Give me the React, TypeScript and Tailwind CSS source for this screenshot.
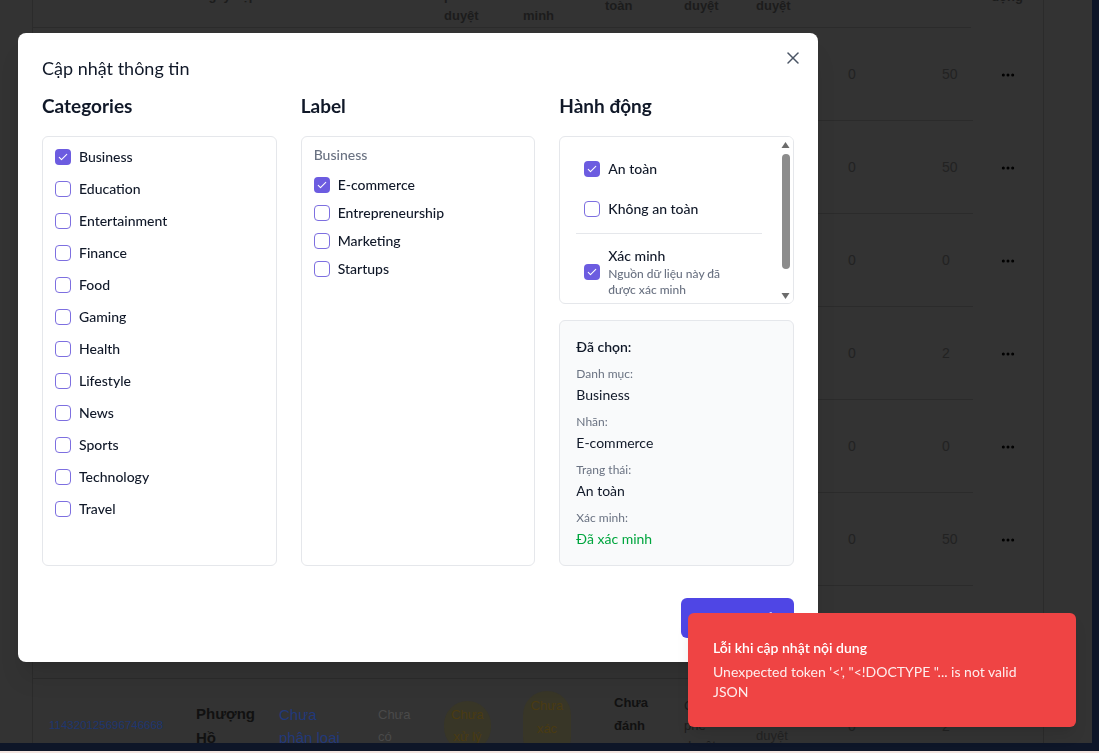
import { X, MoreHorizontal } from "lucide-react";

const categories = [
  "Business",
  "Education",
  "Entertainment",
  "Finance",
  "Food",
  "Gaming",
  "Health",
  "Lifestyle",
  "News",
  "Sports",
  "Technology",
  "Travel",
];

const labels = ["E-commerce", "Entrepreneurship", "Marketing", "Startups"];

const rowValues = [
  ["0", "50"],
  ["0", "50"],
  ["0", "0"],
  ["0", "2"],
  ["0", "0"],
  ["0", "50"],
  ["0", "0"],
];

function Box({ checked }: { checked: boolean }) {
  if (checked) {
    return (
      <span className="flex h-4 w-4 shrink-0 items-center justify-center rounded-[4px] bg-[#6c5ce0]">
        <svg viewBox="0 0 16 16" className="h-3 w-3" fill="none" stroke="white" strokeWidth={1.4}>
          <path d="M3 8.5l3 3 7-7" strokeLinecap="round" strokeLinejoin="round" />
        </svg>
      </span>
    );
  }
  return <span className="block h-4 w-4 shrink-0 rounded-[4px] border-[1.5px] border-[#7d6fe0] bg-white" />;
}

function Field({ label, value, green }: { label: string; value: string; green?: boolean }) {
  return (
    <div className="flex flex-col">
      <span className="text-xs leading-4 text-gray-500">{label}</span>
      <span className={`mt-[3px] text-sm leading-5 ${green ? "text-green-600" : "text-gray-900"}`}>{value}</span>
    </div>
  );
}

function FakeScrollbar() {
  return (
    <div className="flex w-[15px] shrink-0 flex-col items-center bg-white">
      <div className="flex h-[15px] w-full items-center justify-center">
        <svg viewBox="0 0 8 6" className="h-[6px] w-[9px]">
          <path d="M4 0L8 6H0z" fill="#6b6b6b" />
        </svg>
      </div>
      <div className="flex w-full flex-1 flex-col items-center pb-[13px] pt-[2px]">
        <div className="h-[115px] w-[8px] rounded-full bg-[#8c8c8c]" />
      </div>
      <div className="flex h-[15px] w-full items-center justify-center">
        <svg viewBox="0 0 8 6" className="h-[6px] w-[9px]">
          <path d="M0 0H8L4 6z" fill="#6b6b6b" />
        </svg>
      </div>
    </div>
  );
}

function BackgroundTable() {
  return (
    <div
      className="-mt-[35px] ml-[32px] w-[1012px] border-x border-[#2b2b2b] text-[#222]"
      style={{ fontFamily: '"Liberation Sans", Arial, sans-serif' }}
    >
      {/* header, scrolled mostly out of view */}
      <div className="flex h-[63px] items-center text-[13px] font-semibold leading-5 text-[#1c1c1c]">
        <div className="flex w-[940px] items-center self-stretch border-b border-[#2b2b2b]">
          <div className="w-[148px]" />
          <div className="w-[82px] pl-[18px]">Ngày cập</div>
          <div className="w-[100px]" />
          <div className="w-[66px]" />
          <div className="w-[78px] pl-[15px]">
            Chờ
            <br />
            phê
            <br />
            duyệt
          </div>
          <div className="w-[92px] pl-4">
            Đã
            <br />
            xác
            <br />
            minh
          </div>
          <div className="w-[70px] pl-[6px]">
            An
            <br />
            toàn
          </div>
          <div className="w-[72px] pl-[15px]">
            Đã
            <br />
            duyệt
          </div>
          <div className="w-[95px] pl-[15px]">
            Từ chối
            <br />
            duyệt
          </div>
        </div>
        <div className="flex w-[72px] justify-center pb-[20px] text-center">
          Hành
          <br />
          động
        </div>
      </div>
      {rowValues.map((v, i) => (
        <div key={i} className="flex h-[93px] items-center">
          <div className="flex w-[940px] items-center self-stretch border-b border-[#2b2b2b] text-sm">
            <div className="w-[803px]" />
            <div className="w-[98px] pl-[12px]">{v[0]}</div>
            <div className="w-[39px] pl-[8px]">{v[1]}</div>
          </div>
          <div className="flex w-[72px] justify-center text-black">
            <MoreHorizontal size={16} strokeWidth={2.5} />
          </div>
        </div>
      ))}
      <div className="flex h-[93px] items-center">
        <div className="flex w-[940px] items-center self-stretch text-xs">
          <div className="w-[148px] pl-4 text-[11.5px] text-[#1e3670]">114320125696746668</div>
          <div className="w-[82px] pl-[15px] text-[15px] font-bold leading-6 text-[#111]">
            Phượng
            <br />
            Hồ
          </div>
          <div className="w-[100px] pl-4 text-[15px] leading-[23px] text-[#22397a]">
            Chưa
            <br />
            phân loại
          </div>
          <div className="w-[66px] pl-[15px] pt-[22px] text-[13px] leading-[22px] text-[#4a4a4a]">
            Chưa
            <br />
            có
            <br />
            nhãn
          </div>
          <div className="w-[78px] pl-[15px]">
            <div className="flex h-[50px] w-[47px] items-center justify-center rounded-full bg-[#383627] text-center text-[13px] leading-[22px] text-[#4a3b12]">
              Chưa
              <br />
              xử lý
            </div>
          </div>
          <div className="w-[92px] pl-4">
            <div className="flex h-[70px] w-[48px] items-center justify-center rounded-full bg-[#383627] pt-[6px] text-center text-[13px] leading-[23px] text-[#4a3b12]">
              Chưa
              <br />
              xác
              <br />
              minh
            </div>
          </div>
          <div className="w-[70px] pl-[15px] text-[13px] font-bold leading-[23px] text-[#111]">
            Chưa
            <br />
            đánh
            <br />
            giá
          </div>
          <div className="w-[72px] pl-[15px] text-[13px] leading-5 text-[#1c1c1c]">
            Chưa
            <br />
            phê
            <br />
            duyệt
          </div>
          <div className="w-[95px] pl-[15px] text-[13px] leading-5">
            Chưa
            <br />
            duyệt
          </div>
          <div className="w-[98px] pl-[12px] text-sm">0</div>
          <div className="w-[39px] pl-[8px] text-sm">2</div>
        </div>
        <div className="w-[72px]" />
      </div>
    </div>
  );
}

export default function App() {
  return (
    <div className="relative flex h-[753px] w-[1099px] flex-col overflow-hidden bg-[#333333]">
      <div className="flex min-h-0 flex-1">
        <div className="min-w-0 flex-1 overflow-hidden">
          <BackgroundTable />
        </div>
        <div className="w-[7px] bg-[#0e1628]" />
      </div>
      <div className="flex h-[10px] flex-col bg-[#0e1628]">
        <div className="flex-1" />
        <div className="h-[2px] bg-[#f3e4df]" />
      </div>

      {/* modal */}
      <div className="fixed inset-0 pl-[18px] pt-[33px]" style={{ fontFamily: 'Lato, "Noto Sans", sans-serif' }}>
        <div className="relative w-[800px] rounded-lg bg-white px-6 pb-6 pt-[23px] text-gray-900 shadow-xl">
          <button className="absolute right-[15px] top-[15px] text-gray-600">
            <X size={20} strokeWidth={1.8} />
          </button>
          <h2 className="mb-3 text-lg leading-6">Cập nhật thông tin</h2>
          <div className="grid grid-cols-3 gap-6">
            <div>
              <h3 className="mb-4 text-[19px] font-bold leading-7">Categories</h3>
              <div className="flex h-[430px] flex-col gap-3 rounded-md border border-gray-200 p-3 pt-2.5">
                {categories.map((c, i) => (
                  <label key={c} className="flex h-5 items-center gap-2 text-sm font-medium">
                    <Box checked={i === 0} />
                    <span>{c}</span>
                  </label>
                ))}
              </div>
            </div>
            <div>
              <h3 className="mb-4 text-[19px] font-bold leading-7">Label</h3>
              <div className="h-[430px] rounded-md border border-gray-200 px-3 pt-2">
                <div className="mb-2.5 text-sm font-medium leading-5 text-gray-500">Business</div>
                <div className="flex flex-col gap-2">
                  {labels.map((l, i) => (
                    <label key={l} className="flex h-5 items-center gap-2 text-sm font-medium">
                      <Box checked={i === 0} />
                      <span>{l}</span>
                    </label>
                  ))}
                </div>
              </div>
            </div>
            <div>
              <h3 className="mb-4 text-[19px] font-bold leading-7">Hành động</h3>
              <div className="flex h-[168px] overflow-hidden rounded-md border border-gray-200">
                <div className="min-w-0 flex-1 overflow-hidden p-3">
                  <label className="flex items-center gap-2 px-3 py-2.5 text-sm font-medium">
                    <Box checked />
                    <span>An toàn</span>
                  </label>
                  <label className="flex items-center gap-2 px-3 py-2.5 text-sm font-medium">
                    <Box checked={false} />
                    <span>Không an toàn</span>
                  </label>
                  <div className="mx-1 mt-1 border-t border-gray-200" />
                  <label className="flex items-center gap-2 px-3 py-3">
                    <Box checked />
                    <span className="flex flex-col">
                      <span className="text-sm font-medium leading-5">Xác minh</span>
                      <span className="max-w-[125px] text-xs font-medium leading-4 text-gray-500">
                        Nguồn dữ liệu này đã được xác minh
                      </span>
                    </span>
                  </label>
                </div>
                <FakeScrollbar />
              </div>
              <div className="mt-4 flex flex-col gap-[9px] rounded-md border border-gray-200 bg-gray-50 p-4">
                <div className="text-sm font-semibold leading-5">Đã chọn:</div>
                <Field label="Danh mục:" value="Business" />
                <Field label="Nhãn:" value="E-commerce" />
                <Field label="Trạng thái:" value="An toàn" />
                <Field label="Xác minh:" value="Đã xác minh" green />
              </div>
            </div>
          </div>
          <div className="mt-8 flex justify-end">
            <button className="rounded-md bg-[#4f46e5] px-[18px] py-2.5 text-sm font-medium leading-5 text-white">
              Lưu thay đổi
            </button>
          </div>
        </div>
      </div>

      {/* toast */}
      <div
        className="fixed bottom-[26px] right-[23px] w-[388px] rounded-md bg-[#ef4444] p-[25px] text-white shadow-lg"
        style={{ fontFamily: 'Lato, "Noto Sans", sans-serif' }}
      >
        <div className="text-sm font-semibold leading-5">Lỗi khi cập nhật nội dung</div>
        <div className="mt-1 text-sm leading-5 text-white/90">
          Unexpected token '&lt;', "&lt;!DOCTYPE "... is not valid JSON
        </div>
      </div>
    </div>
  );
}
